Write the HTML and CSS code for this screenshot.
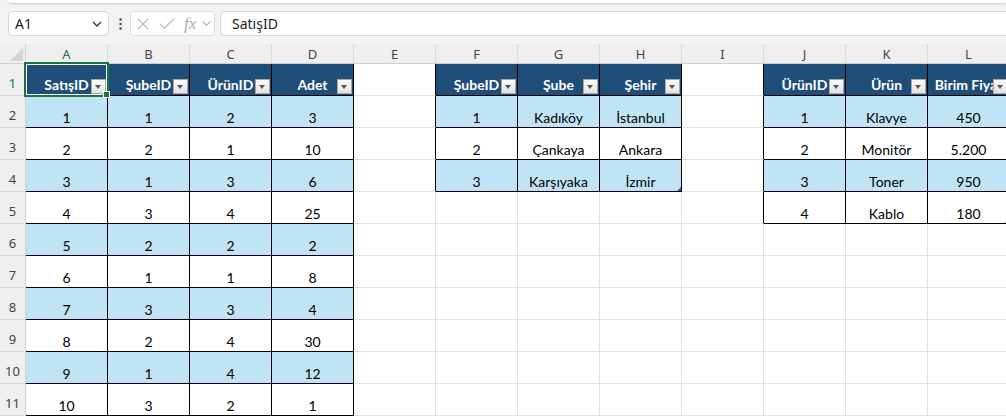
FILE: index.html
```html
<!DOCTYPE html>
<html lang="tr">
<head>
    <meta charset="UTF-8">
    <meta name="viewport" content="width=device-width, initial-scale=1.0">
    <title>Satışlar - Excel</title>
    <link rel="stylesheet" href="styles.css">
</head>
<body>
    <div class="ribbon-edge"></div>

    <div class="formula-bar">
        <div class="name-box">
            <span>A1</span>
            <svg class="chevron" width="10" height="6" viewBox="0 0 10 6"><path d="M1 1L5 5L9 1" fill="none" stroke="#333" stroke-width="1.3"/></svg>
        </div>
        <svg class="grip" width="3" height="12" viewBox="0 0 3 12">
            <circle cx="1.5" cy="1.5" r="1.2" fill="#444"/>
            <circle cx="1.5" cy="6" r="1.2" fill="#444"/>
            <circle cx="1.5" cy="10.5" r="1.2" fill="#444"/>
        </svg>
        <div class="fx-tools">
            <svg class="cancel" width="12" height="12" viewBox="0 0 12 12"><path d="M0.8 0.8L11.2 11.2M11.2 0.8L0.8 11.2" stroke="#b8b8b8" stroke-width="1.2"/></svg>
            <svg class="enter" width="16" height="11" viewBox="0 0 16 11"><path d="M0.8 5.6L5.4 10.2L15.2 0.6" fill="none" stroke="#b8b8b8" stroke-width="1.2"/></svg>
            <span class="fx">fx</span>
            <svg class="fx-more" width="9" height="5" viewBox="0 0 9 5"><path d="M0.7 0.7L4.5 4.3L8.3 0.7" fill="none" stroke="#a8a8a8" stroke-width="1.1"/></svg>
        </div>
        <div class="formula-input">SatışID</div>
    </div>

    <div class="sheet">
        <div class="grid" id="grid"></div>
        <div class="selection"><span class="fill-handle"></span></div>
    </div>

    <script>
        // three tables placed on the sheet: first column (A = 1), header, body rows
        const tables = [
            {
                col: 1,
                head: ['SatışID', 'ŞubeID', 'ÜrünID', 'Adet'],
                body: [
                    ['1', '1', '2', '3'],
                    ['2', '2', '1', '10'],
                    ['3', '1', '3', '6'],
                    ['4', '3', '4', '25'],
                    ['5', '2', '2', '2'],
                    ['6', '1', '1', '8'],
                    ['7', '3', '3', '4'],
                    ['8', '2', '4', '30'],
                    ['9', '1', '4', '12'],
                    ['10', '3', '2', '1']
                ],
                more: true // continues below the visible rows
            },
            {
                col: 6,
                head: ['ŞubeID', 'Şube', 'Şehir'],
                body: [
                    ['1', 'Kadıköy', 'İstanbul'],
                    ['2', 'Çankaya', 'Ankara'],
                    ['3', 'Karşıyaka', 'İzmir']
                ]
            },
            {
                col: 10,
                head: ['ÜrünID', 'Ürün', 'Birim Fiyat'],
                body: [
                    ['1', 'Klavye', '450'],
                    ['2', 'Monitör', '5.200'],
                    ['3', 'Toner', '950'],
                    ['4', 'Kablo', '180']
                ]
            }
        ];

        const letters = 'ABCDEFGHIJKL';
        const rowCount = 11;
        const grid = document.getElementById('grid');

        function add(cls, html) {
            const div = document.createElement('div');
            div.className = cls;
            if (html !== undefined) div.innerHTML = html;
            grid.appendChild(div);
            return div;
        }

        // column headers
        add('corner');
        for (let c = 0; c < letters.length; c++) {
            add('col-head' + (c === 0 ? ' active' : ''), letters[c]);
        }

        for (let r = 1; r <= rowCount; r++) {
            add('row-head' + (r === 1 ? ' active' : ''), String(r));

            for (let c = 1; c <= letters.length; c++) {
                const t = tables.find(t => c >= t.col && c < t.col + t.head.length && r <= t.body.length + 1);
                const edge = tables.some(t => c === t.col - 1 && r <= t.body.length + 1);
                let cls = 'cell' + (edge ? ' edge' : '');

                if (!t) {
                    add(cls);
                    continue;
                }

                const i = c - t.col;
                if (r === 1) {
                    add(cls + ' th', '<div class="label">' + t.head[i] + '</div><span class="filter"></span>');
                } else {
                    cls += ' td' + (r % 2 === 0 ? ' band' : '');
                    const cell = add(cls, '<div class="label">' + t.body[r - 2][i] + '</div>');
                    if (!t.more && r === t.body.length + 1 && i === t.head.length - 1) {
                        cell.insertAdjacentHTML('beforeend', '<span class="resize-grip"></span>');
                    }
                }
            }
        }
    </script>
</body>
</html>
```

FILE: styles.css
```css
body {
    margin: 0;
    width: 1006px;
    height: 416px;
    overflow: hidden;
    background: #f3f3f3;
    font-family: "Noto Sans", "Open Sans", sans-serif;
    color: #222;
}

/* bottom of the ribbon panel */
.ribbon-edge {
    margin-left: 8px;
    height: 3px;
    background: #fff;
    border-bottom-left-radius: 6px;
    box-shadow: 0 1px 2px rgba(0, 0, 0, 0.18);
}

.formula-bar {
    display: flex;
    align-items: center;
    height: 25px;
    margin-top: 8px;
    padding-left: 8px;
}
.name-box {
    box-sizing: border-box;
    width: 101px;
    height: 25px;
    display: flex;
    align-items: center;
    justify-content: space-between;
    padding: 0 6px 0 6px;
    background: #fff;
    border: 1px solid #d6d6d6;
    border-radius: 4px;
    font-size: 14px;
}
.grip {
    margin: 0 8px 0 10px;
}
.fx-tools {
    box-sizing: border-box;
    width: 85px;
    height: 25px;
    display: flex;
    align-items: center;
    background: #fff;
    border: 1px solid #dedede;
    border-radius: 4px;
}
.cancel {
    margin-left: 6px;
}
.enter {
    margin-left: 10px;
}
.fx {
    margin-left: 9px;
    font-family: "Liberation Serif", serif;
    font-style: italic;
    font-size: 17px;
    line-height: 17px;
    color: #ababab;
}
.fx-more {
    margin-left: 6px;
}
.formula-input {
    box-sizing: border-box;
    flex: 1;
    height: 25px;
    margin: 0 -12px 0 5px;
    padding-left: 11px;
    display: flex;
    align-items: center;
    background: #fff;
    border: 1px solid #d6d6d6;
    border-radius: 4px;
    font-size: 14px;
}

/* worksheet */
.sheet {
    position: relative;
    margin-top: 8px;
}
.grid {
    display: grid;
    grid-template-columns: 26px repeat(12, 82px);
    grid-template-rows: 20px repeat(11, 32px);
    width: max-content;
}
.corner,
.col-head,
.row-head,
.cell {
    box-sizing: border-box;
}
.corner {
    position: relative;
    background: #efefef;
    border-right: 1px solid #cfcfcf;
    border-bottom: 1px solid #cfcfcf;
}
.corner::after {
    content: "";
    position: absolute;
    right: 2px;
    bottom: 2px;
    width: 13px;
    height: 13px;
    background: #d3d3d3;
    clip-path: polygon(100% 0, 100% 100%, 0 100%);
}
.col-head {
    display: flex;
    align-items: center;
    justify-content: center;
    background: #efefef;
    border-right: 1px solid #dadada;
    border-bottom: 1px solid #cfcfcf;
    font-size: 13px;
    color: #444;
}
.row-head {
    display: flex;
    align-items: flex-end;
    justify-content: center;
    padding-bottom: 3px;
    background: #efefef;
    border-right: 1px solid #cfcfcf;
    border-bottom: 1px solid #dadada;
    font-size: 13px;
    color: #444;
}
.col-head.active,
.row-head.active {
    color: #1e7145;
}

.cell {
    position: relative;
    display: flex;
    flex-direction: column;
    justify-content: flex-end;
    padding-bottom: 1px;
    background: #fff;
    border-right: 1px solid #e1e1e1;
    border-bottom: 1px solid #e1e1e1;
    overflow: hidden;
    font-family: Lato, "Open Sans", sans-serif;
    font-size: 14px;
    line-height: 17px;
    color: #000;
}
.cell .label {
    text-align: center;
    white-space: nowrap;
}
.cell.edge {
    border-right-color: #000;
}
.cell.th,
.cell.td {
    border-color: #000;
}
.cell.th {
    padding-bottom: 2px;
    background: #1f4e78;
    color: #fff;
    font-weight: 700;
}
.cell.band {
    background: #c0e4f5;
}

/* autofilter arrow button in table headers */
.filter {
    position: absolute;
    right: 1px;
    bottom: 1px;
    box-sizing: border-box;
    width: 15px;
    height: 15px;
    background: linear-gradient(#fbfbfb, #e2e2e2);
    border: 1px solid #a8a8a8;
}
.filter::after {
    content: "";
    position: absolute;
    left: 3px;
    top: 5px;
    border-left: 3.5px solid transparent;
    border-right: 3.5px solid transparent;
    border-top: 4px solid #555;
}

.resize-grip {
    position: absolute;
    right: 0;
    bottom: 0;
    border-left: 4px solid transparent;
    border-bottom: 4px solid #3a5ea8;
}

/* active cell A1 */
.selection {
    position: absolute;
    left: 24px;
    top: 18px;
    width: 85px;
    height: 35px;
    box-sizing: border-box;
    border: 2px solid #1e7145;
    box-shadow: inset 0 0 0 1px #fff;
    pointer-events: none;
}
.fill-handle {
    position: absolute;
    right: -3px;
    bottom: -3px;
    width: 5px;
    height: 5px;
    background: #1e7145;
    border: 1px solid #fff;
}
```
